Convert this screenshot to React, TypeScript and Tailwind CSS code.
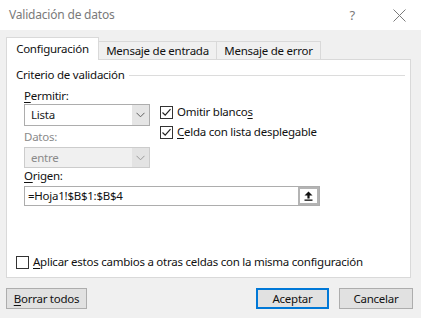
import React from 'react';

const font = { fontFamily: '"Noto Sans", "Open Sans", sans-serif' };

function Check({ checked }: { checked?: boolean }) {
  return (
    <span className="flex h-[13px] w-[13px] shrink-0 items-center justify-center border border-[#333333] bg-white">
      {checked && (
        <svg width="11" height="11" viewBox="0 0 11 11" fill="none">
          <path d="M1.5 5.5 L4.2 8.2 L9.5 2.2" stroke="#222222" strokeWidth="1.2" />
        </svg>
      )}
    </span>
  );
}

function Chevron({ color }: { color: string }) {
  return (
    <svg width="9" height="6" viewBox="0 0 9 6" fill="none">
      <path d="M0.5 0.8 L4.5 4.8 L8.5 0.8" stroke={color} strokeWidth="1" />
    </svg>
  );
}

function Select({ value, disabled }: { value: string; disabled?: boolean }) {
  return (
    <div
      className={`flex w-[126px] border ${disabled ? 'h-[21px] border-[#cccccc] bg-[#f0f0f0] text-[#8a8a8a]' : 'h-[22px] border-[#adadad] bg-white text-[#1a1a1a]'}`}
    >
      <div className="flex flex-1 items-center pl-[6px]">{value}</div>
      <div className={`flex w-[17px] items-center justify-center ${disabled ? 'bg-[#e3e3e3]' : 'bg-[#e5e5e5]'}`}>
        <Chevron color={disabled ? '#9a9a9a' : '#606060'} />
      </div>
    </div>
  );
}

export default function App() {
  return (
    <div
      className="flex h-[318px] w-[421px] flex-col overflow-hidden whitespace-nowrap bg-[#f0f0f0] text-[11.5px] leading-[16px] tracking-[-0.25px] text-[#111111]"
      style={font}
    >
      <div className="flex h-[30px] shrink-0 items-center bg-white pl-[9px]">
        <span className="flex-1 text-[12px] tracking-[-0.2px] text-[#7a7a7a]">Validación de datos</span>
        <span className="mr-[38px] text-[13px] text-[#7a7a7a]">?</span>
        <svg className="mr-[15px]" width="13" height="13" viewBox="0 0 13 13">
          <path d="M0.5 0.5 L12.5 12.5 M12.5 0.5 L0.5 12.5" stroke="#7a7a7a" strokeWidth="1" />
        </svg>
      </div>

      <div className="flex flex-1 flex-col pl-[6px] pr-[10px]">
        <div className="mt-[7px] flex h-[23px] items-end">
          <div className="relative z-10 flex h-[23px] w-[93px] shrink-0 items-center justify-center overflow-hidden border border-b-0 border-[#d9d9d9] bg-white">
            Configuración
          </div>
          <div className="flex h-[19px] w-[118px] shrink-0 items-center justify-center overflow-hidden border border-b-0 border-l-0 border-[#d9d9d9]">
            Mensaje de entrada
          </div>
          <div className="flex h-[19px] w-[104px] shrink-0 items-center justify-center overflow-hidden border border-b-0 border-l-0 border-[#d9d9d9]">
            Mensaje de error
          </div>
        </div>

        <div className="-mt-px flex h-[219px] flex-col border border-[#d9d9d9] bg-white pl-[9px] pr-[5px]">
          <div className="mt-[7px] flex items-center">
            <span>Criterio de validación</span>
            <div className="ml-[4px] h-px flex-1 bg-[#dcdcdc]" />
          </div>

          <div className="flex pl-[8px]">
            <div className="flex w-[126px] flex-col">
              <div className="mt-[5px]">
                <span className="underline underline-offset-2">P</span>ermitir:
              </div>
              <Select value="Lista" />
              <div className="mt-[3px] text-[#8a8a8a]">Datos:</div>
              <div className="mt-[2px]">
                <Select value="entre" disabled />
              </div>
            </div>
            <div className="ml-[10px] mt-[21px] flex flex-col gap-[4px]">
              <label className="flex items-center gap-[4px]">
                <Check checked />
                <span>
                  Omitir blanco<span className="underline underline-offset-2">s</span>
                </span>
              </label>
              <label className="flex items-center gap-[4px]">
                <Check checked />
                <span>
                  <span className="underline underline-offset-2">C</span>elda con lista desplegable
                </span>
              </label>
            </div>
          </div>

          <div className="pl-[8px]">
            <span className="underline underline-offset-2">O</span>rigen:
          </div>
          <div className="ml-[8px] mt-[2px] flex h-[20px] w-[296px] border border-[#adadad]">
            <div className="flex flex-1 items-center pl-[3px]">=Hoja1!$B$1:$B$4</div>
            <div className="flex w-[21px] items-center justify-center border-2 border-[#b4b4b4] bg-white">
              <svg width="9" height="10" viewBox="0 0 9 10">
                <path d="M4.5 0.5 L8.5 4.5 L5.6 4.5 L5.6 7.5 L3.4 7.5 L3.4 4.5 L0.5 4.5 Z" fill="#111111" />
                <rect x="0.5" y="8.5" width="8" height="1.3" fill="#111111" />
              </svg>
            </div>
          </div>

          <label className="mt-[48px] flex items-center gap-[4px]">
            <Check />
            <span>
              <span className="underline underline-offset-2">A</span>plicar estos cambios a otras celdas con la misma configuración
            </span>
          </label>
        </div>

        <div className="mt-[10px] flex">
          <button className="flex h-[21px] w-[81px] items-center justify-center border border-[#adadad] bg-[#e1e1e1]">
            <span>
              <span className="underline underline-offset-2">B</span>orrar todos
            </span>
          </button>
          <div className="flex-1" />
          <button className="flex h-[21px] w-[73px] items-center justify-center border-2 border-[#0078d7] bg-[#e1e1e1]">
            Aceptar
          </button>
          <button className="ml-[10px] mr-[-2px] flex h-[21px] w-[74px] items-center justify-center border border-[#adadad] bg-[#e1e1e1]">
            Cancelar
          </button>
        </div>
      </div>
    </div>
  );
}
